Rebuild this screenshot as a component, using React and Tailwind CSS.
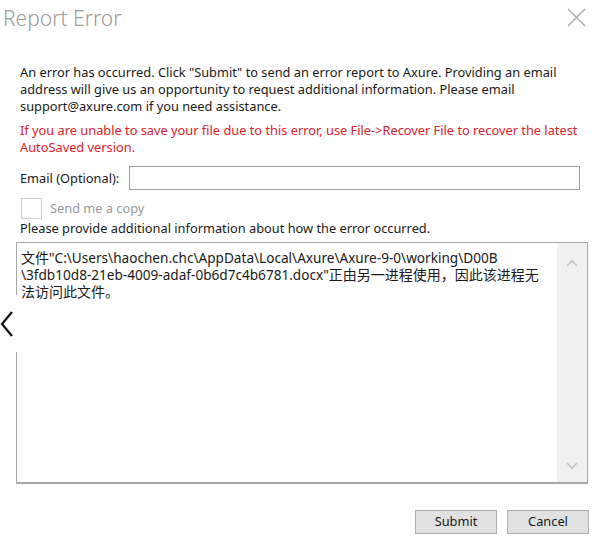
import React from 'react';

const ChevronUp = () => (
  <svg width="12" height="8" viewBox="0 0 12 8" fill="none">
    <path d="M1 7 L6 2 L11 7" stroke="#c4c4c4" strokeWidth="1.6" />
  </svg>
);

const ChevronDown = () => (
  <svg width="12" height="8" viewBox="0 0 12 8" fill="none">
    <path d="M1 1 L6 6 L11 1" stroke="#c4c4c4" strokeWidth="1.6" />
  </svg>
);

const App = () => {
  return (
    <div
      className="relative w-[600px] h-[543px] overflow-hidden bg-white text-[#1a1a1a]"
      style={{ fontFamily: '"Noto Sans", "Noto Sans CJK SC", sans-serif' }}
    >
      {/* title bar */}
      <div className="h-[64px] pl-[3px] pt-[3px]">
        <h1 className="text-[21px] leading-[30px] font-light text-[#9a9a9a]">Report Error</h1>
      </div>
      <button className="absolute top-[8px] left-[567px] w-[19px] h-[19px]">
        <svg width="19" height="19" viewBox="0 0 19 19" fill="none">
          <path d="M1 1 L18 18 M18 1 L1 18" stroke="#a8a8a8" strokeWidth="1.3" />
        </svg>
      </button>

      <div className="px-[20px] text-[12.8px] leading-[17px]">
        <p>
          An error has occurred. Click "Submit" to send an error report to Axure. Providing an email
          <br />
          address will give us an opportunity to request additional information. Please email
          <br />
          support@axure.com if you need assistance.
        </p>
        <p className="mt-[7px] text-[#e0202a]">
          If you are unable to save your file due to this error, use File-&gt;Recover File to recover the latest
          <br />
          AutoSaved version.
        </p>

        <div className="mt-[10px] flex items-center h-[24px]">
          <label className="w-[109px] shrink-0">Email (Optional):</label>
          <input className="h-[24px] w-[452px] border border-[#a0a0a0] bg-white outline-none px-1" />
        </div>

        <div className="mt-[8px] flex items-center h-[21px] ml-[1px]">
          <div className="w-[21px] h-[21px] border border-[#cfcfcf] bg-white" />
          <span className="ml-[8px] text-[#9a9a9a]">Send me a copy</span>
        </div>

        <p className="mt-[1px]">Please provide additional information about how the error occurred.</p>

        <div className="mt-[5px] -ml-[4px] w-[572px] h-[242px] border border-[#a8a8a8] border-b-[2px] flex">
          <div className="flex-1 pl-[4px] pt-[6px] text-[13.6px] leading-[17px]">
            <div className="h-[17px] whitespace-nowrap">
              <span className="text-[14px]">文件</span>"C:\Users\haochen.chc\AppData\Local\Axure\Axure-9-0\working\D00B
            </div>
            <div className="h-[17px] whitespace-nowrap">
              \3fdb10d8-21eb-4009-adaf-0b6d7c4b6781.docx"<span className="text-[14px]">正由另一进程使用，因此该进程无</span>
            </div>
            <div className="h-[17px] whitespace-nowrap text-[14px]">法访问此文件。</div>
          </div>
          <div className="w-[30px] bg-[#f0f0f0] flex flex-col items-center justify-between pt-[16px] pb-[12px]">
            <ChevronUp />
            <ChevronDown />
          </div>
        </div>
      </div>

      <div className="mt-[26px] flex justify-end gap-[10px] pr-[11px]">
        <button className="w-[82px] h-[24px] bg-[#e1e1e1] border border-[#adadad] text-[12.8px]">Submit</button>
        <button className="w-[82px] h-[24px] bg-[#e1e1e1] border border-[#adadad] text-[12.8px]">Cancel</button>
      </div>

      {/* lightbox previous arrow over the dialog edge */}
      <div className="absolute left-0 top-[295px] w-[17px] h-[57px] bg-white flex items-center">
        <svg width="14" height="26" viewBox="0 0 14 26" fill="none">
          <path d="M12 1 L2 13 L12 25" stroke="#111" strokeWidth="2.2" />
        </svg>
      </div>
    </div>
  );
};

export default App;
